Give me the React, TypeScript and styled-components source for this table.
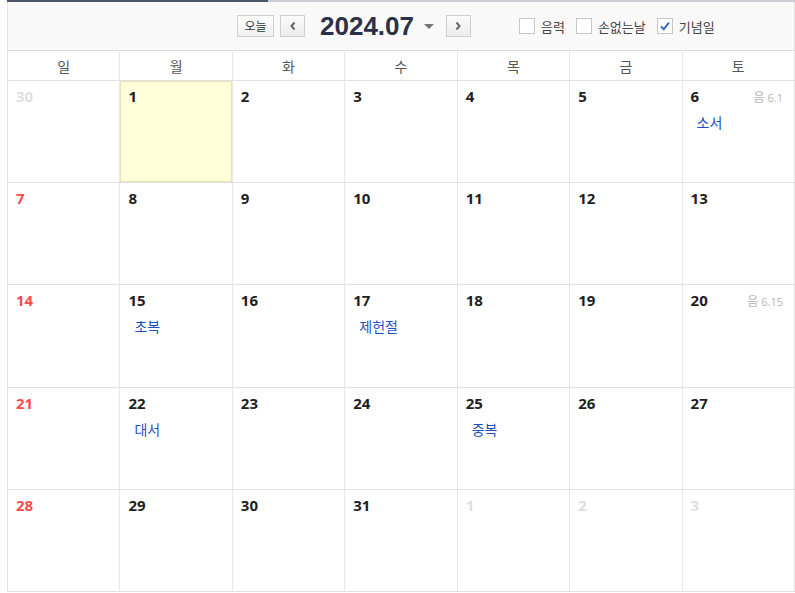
import styled, { createGlobalStyle } from 'styled-components'

const GlobalStyle = createGlobalStyle`
	body {
		margin: 0;
		background: #fff;
		font-family: 'Noto Sans CJK KR', 'Noto Sans', sans-serif;
	}
`

const Wrapper = styled.div`
	margin-left: 7px;
	width: 788px;
`

const TabLine = styled.div`
	display: flex;
	height: 2px;
`

const TabSegment = styled.div<{ $active?: boolean }>`
	width: ${(p) => (p.$active ? '261px' : 'auto')};
	flex: ${(p) => (p.$active ? 'none' : '1')};
	background: ${(p) => (p.$active ? '#4b5569' : '#c9ccd2')};
`

const Toolbar = styled.div`
	height: 49px;
	box-sizing: border-box;
	display: flex;
	align-items: center;
	padding-left: 229px;
	background: #f9f9f9;
	border-left: 1px solid #e2e2e2;
	border-right: 1px solid #e2e2e2;
	border-bottom: 1px solid #dcdcdc;
`

const TodayButton = styled.button`
	height: 22px;
	width: 37px;
	padding: 0;
	margin-right: 6px;
	border: 1px solid #cfcfcf;
	background: linear-gradient(#ffffff, #f1f1f1);
	font-family: 'Noto Sans CJK KR', sans-serif;
	font-size: 12px;
	color: #333;
	line-height: 18px;
`

const ArrowButton = styled.button`
	width: 25px;
	height: 22px;
	padding: 0;
	border: 1px solid #cfcfcf;
	background: linear-gradient(#fbfbfb, #ececec);
	display: flex;
	align-items: center;
	justify-content: center;
`

const Title = styled.div`
	display: flex;
	align-items: center;
	margin: 0 12px 0 15px;
	font-family: 'Liberation Sans', Arial, sans-serif;
	font-weight: 700;
	font-size: 26px;
	color: #2c3148;
`

const Caret = styled.span`
	margin-left: 10px;
	width: 0;
	height: 0;
	border-left: 5px solid transparent;
	border-right: 5px solid transparent;
	border-top: 5px solid #777;
`

const Options = styled.div`
	display: flex;
	align-items: center;
	margin-left: 48px;
	gap: 11px;
`

const Option = styled.label`
	display: flex;
	align-items: center;
	gap: 6px;
	font-size: 13px;
	color: #444;
`

const Box = styled.span`
	width: 16px;
	height: 16px;
	box-sizing: border-box;
	border: 1px solid #c8c8c8;
	background: #fff;
	display: flex;
	align-items: center;
	justify-content: center;
`

const Grid = styled.div`
	display: grid;
	grid-template-columns: repeat(7, 1fr);
	border-left: 1px solid #e2e2e2;
`

const DayName = styled.div`
	height: 30px;
	box-sizing: border-box;
	display: flex;
	align-items: center;
	justify-content: center;
	border-right: 1px solid #e6e6e6;
	border-bottom: 1px solid #e2e2e2;
	font-size: 14px;
	color: #555;
`

const Cell = styled.div<{ $today?: boolean }>`
	height: 102.2px;
	position: relative;
	padding: 5px 0 0 8px;
	box-sizing: border-box;
	border-right: 1px solid #e6e6e6;
	border-bottom: 1px solid #e2e2e2;
	background: ${(p) => (p.$today ? '#ffffd9' : '#fff')};
	box-shadow: ${(p) => (p.$today ? 'inset 0 0 0 1px #e4e4b4' : 'none')};
`

const DateRow = styled.div`
	display: flex;
	align-items: baseline;
	justify-content: space-between;
	padding-right: 11px;
`

const DateNum = styled.span<{ $tone: 'normal' | 'sun' | 'other' }>`
	font-family: 'Open Sans', 'Noto Sans', sans-serif;
	font-weight: 700;
	font-size: 15px;
	color: ${(p) => (p.$tone === 'sun' ? '#ff4a4a' : p.$tone === 'other' ? '#dedede' : '#1e1e1e')};
`

const Lunar = styled.span`
	font-size: 12px;
	color: #b5b5b5;
	font-family: 'Noto Sans CJK KR', sans-serif;
	span {
		font-family: 'Open Sans', sans-serif;
		font-size: 11px;
		margin-left: 3px;
	}
`

const Event = styled.div`
	margin: 6px 0 0 6px;
	font-size: 14px;
	color: #1d4fc4;
`

type Day = { d: number; other?: boolean; lunar?: string; event?: string; today?: boolean }

const weeks: Day[][] = [
	[{ d: 30, other: true }, { d: 1, today: true }, { d: 2 }, { d: 3 }, { d: 4 }, { d: 5 }, { d: 6, lunar: '6.1', event: '소서' }],
	[{ d: 7 }, { d: 8 }, { d: 9 }, { d: 10 }, { d: 11 }, { d: 12 }, { d: 13 }],
	[{ d: 14 }, { d: 15, event: '초복' }, { d: 16 }, { d: 17, event: '제헌절' }, { d: 18 }, { d: 19 }, { d: 20, lunar: '6.15' }],
	[{ d: 21 }, { d: 22, event: '대서' }, { d: 23 }, { d: 24 }, { d: 25, event: '중복' }, { d: 26 }, { d: 27 }],
	[{ d: 28 }, { d: 29 }, { d: 30 }, { d: 31 }, { d: 1, other: true }, { d: 2, other: true }, { d: 3, other: true }],
]

const dayNames = ['일', '월', '화', '수', '목', '금', '토']

const Chevron = ({ dir }: { dir: 'left' | 'right' }) => (
	<svg width='8' height='10' viewBox='0 0 8 10'>
		<path
			d={dir === 'left' ? 'M5.5 1.5 L2.5 5 L5.5 8.5' : 'M2.5 1.5 L5.5 5 L2.5 8.5'}
			fill='none'
			stroke='#666'
			strokeWidth='2'
		/>
	</svg>
)

const App = () => {
	return (
		<Wrapper>
			<GlobalStyle />
			<TabLine>
				<TabSegment $active />
				<TabSegment />
			</TabLine>
			<Toolbar>
				<TodayButton>오늘</TodayButton>
				<ArrowButton>
					<Chevron dir='left' />
				</ArrowButton>
				<Title>
					2024.07
					<Caret />
				</Title>
				<ArrowButton>
					<Chevron dir='right' />
				</ArrowButton>
				<Options>
					<Option>
						<Box />
						음력
					</Option>
					<Option>
						<Box />
						손없는날
					</Option>
					<Option>
						<Box>
							<svg width='12' height='12' viewBox='0 0 12 12'>
								<path d='M2 6.5 L4.8 9.2 L10 2.5' fill='none' stroke='#2f6fc4' strokeWidth='2' />
							</svg>
						</Box>
						기념일
					</Option>
				</Options>
			</Toolbar>
			<Grid>
				{dayNames.map((n) => (
					<DayName key={n}>{n}</DayName>
				))}
				{weeks.map((week, wi) =>
					week.map((day, di) => (
						<Cell key={`${wi}-${di}`} $today={day.today}>
							<DateRow>
								<DateNum $tone={day.other ? 'other' : di === 0 ? 'sun' : 'normal'}>{day.d}</DateNum>
								{day.lunar && (
									<Lunar>
										음<span>{day.lunar}</span>
									</Lunar>
								)}
							</DateRow>
							{day.event && <Event>{day.event}</Event>}
						</Cell>
					))
				)}
			</Grid>
		</Wrapper>
	)
}

export default App
